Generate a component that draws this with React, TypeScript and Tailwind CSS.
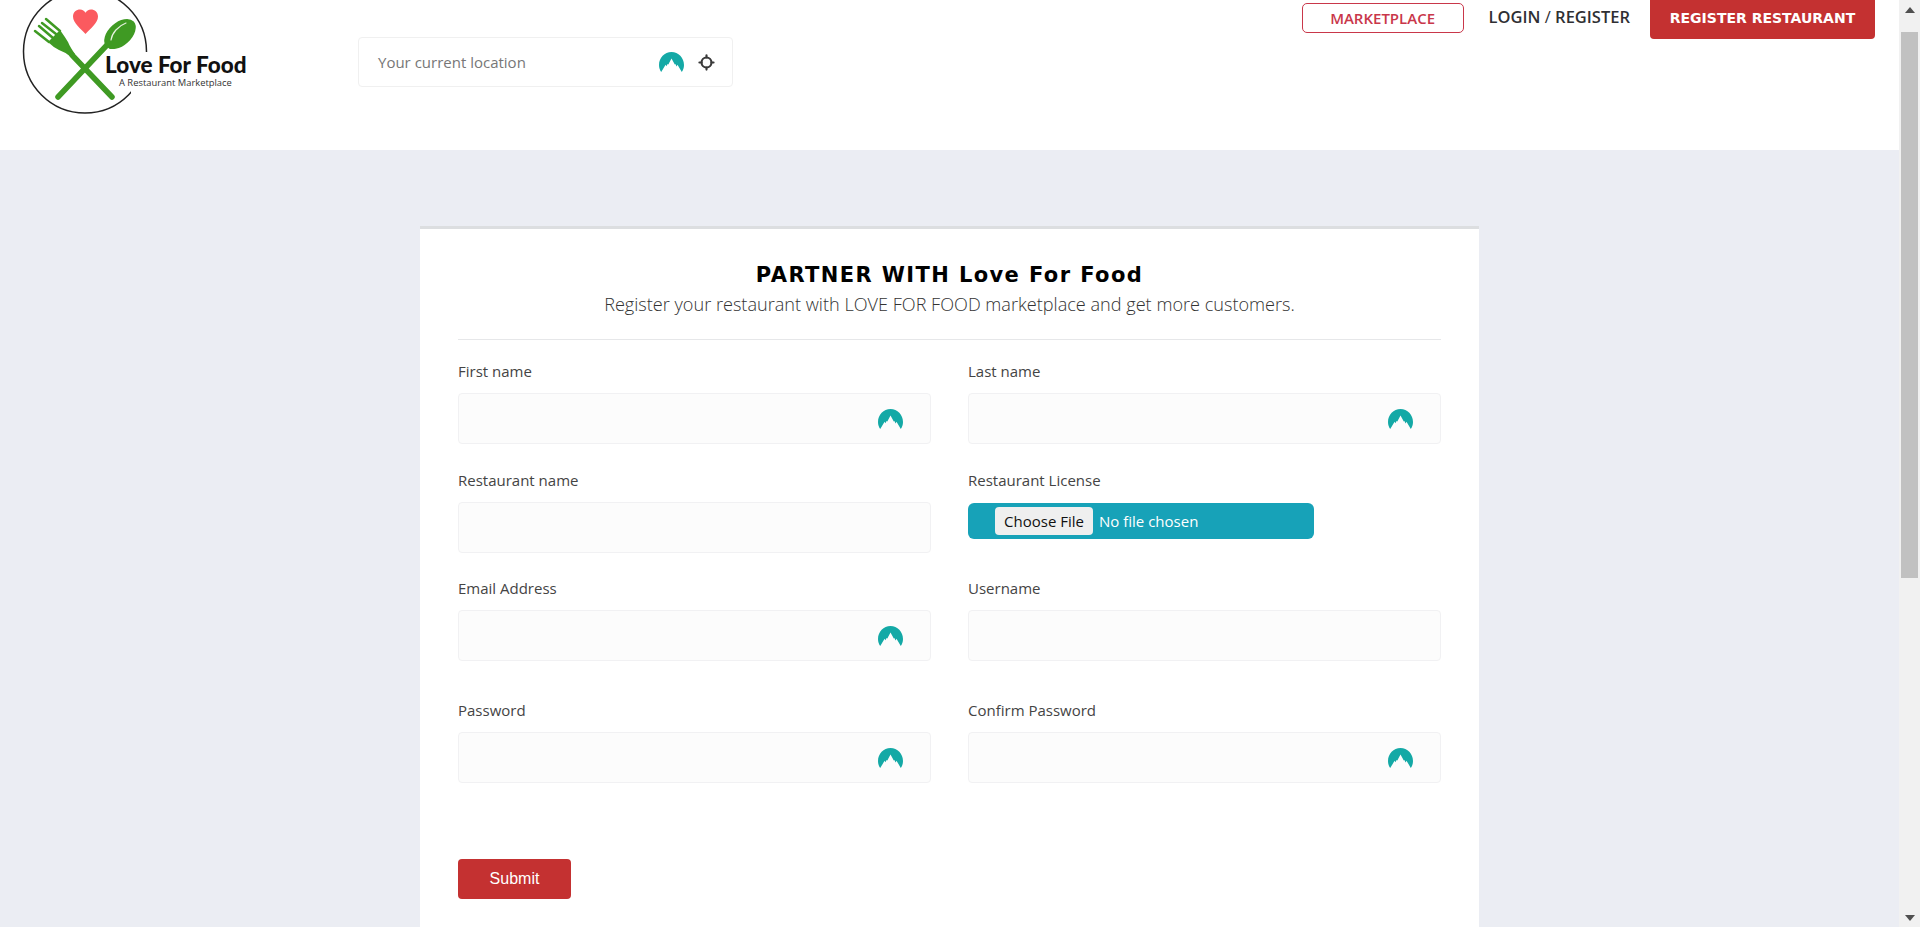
import { Locate } from 'lucide-react';

const TealDome = () => (
    <svg viewBox="0 0 25 20" className="h-5 w-[25px] shrink-0">
        <path
            d="M2.2 20C.8 18 0 15.6 0 12.9 0 5.8 5.6 0 12.5 0S25 5.8 25 12.9c0 2.7-.8 5.1-2.2 7.1l-4.3-7.3-.9 1.7-1.2-2.4-.6.6-3.3-6-3.2 6-.7-.7-1.2 2.4-.8-1.5z"
            fill="#14a9a6"
        />
    </svg>
);

const Logo = () => (
    <div className="relative h-[150px] w-[358px] shrink-0 overflow-hidden">
        <svg viewBox="0 0 170 120" className="absolute left-[15px] top-0 h-[120px] w-[170px]">
            <circle cx="70" cy="51.500" r="61.500" fill="none" stroke="#222" strokeWidth="1.500" />
            <rect x="116" y="52" width="54" height="46" fill="#fff" />
            {/* heart */}
            <path
                d="M70.500 34C66 29 58 23 58 16.500 58 12 61.500 9.500 65 9.500c2.500 0 4.500 1.300 5.500 3.300 1-2 3-3.300 5.500-3.300 3.500 0 7 2.500 7 7C83 23 75 29 70.500 34z"
                fill="#fb5a5f"
            />
            {/* fork */}
            <path d="M97 97 57 55" stroke="#3f9a23" strokeWidth="5.500" strokeLinecap="round" />
            <path d="M33 42 45 30Q50 37 53 42 55 47 60 54L56 57Q50 52 44 50 38 47 33 42z" fill="#3f9a23" />
            <path d="M34 42 20 31M38 38 24 26M41 34 27 23M45 31 31 19" stroke="#3f9a23" strokeWidth="2.500" strokeLinecap="round" />
            {/* spoon */}
            <path d="M43 97 92 45" stroke="#3f9a23" strokeWidth="5.500" strokeLinecap="round" />
            <ellipse cx="105" cy="34" rx="18.500" ry="11.500" transform="rotate(-42 105 34)" fill="#3f9a23" />
            <path d="M96 40c1-7 7-14 15-17" fill="none" stroke="#e6f2df" strokeWidth="1.200" strokeLinecap="round" />
        </svg>
        <span className="absolute left-[105px] top-[52px] font-['Lato',sans-serif] text-[22.500px] leading-[26px] font-black text-[#111] whitespace-nowrap">
            Love For Food
        </span>
        <span className="absolute left-[119px] top-[76px] font-['Open_Sans',sans-serif] text-[9.400px] leading-[13px] text-[#333] whitespace-nowrap">
            A Restaurant Marketplace
        </span>
    </div>
);

const Field = ({ label, icon = false }: { label: string; icon?: boolean }) => (
    <div>
        <label className="mb-[11px] block h-[22px] text-[15px] leading-[22px] text-[#444]">{label}</label>
        <div className="flex h-[51px] items-center justify-end rounded border border-[#f1f1f3] bg-[#fcfcfc] pr-[27px]">
            {icon && <TealDome />}
        </div>
    </div>
);

const Scrollbar = () => (
    <div className="flex h-full w-[21px] shrink-0 flex-col bg-[#f1f1f1] px-[2px]">
        <div className="flex h-[32px] justify-center pt-[7px]">
            <div className="h-0 w-0 border-x-[5px] border-b-[6px] border-x-transparent border-b-[#505050]" />
        </div>
        <div className="h-[546px] bg-[#c1c1c1]" />
        <div className="flex flex-1 items-end justify-center pb-[6px]">
            <div className="h-0 w-0 border-x-[5px] border-t-[6px] border-x-transparent border-t-[#505050]" />
        </div>
    </div>
);

export default function App() {
    return (
        <div className="flex h-[927px] w-full overflow-hidden bg-white font-['Open_Sans',sans-serif]">
            <div className="min-w-0 flex-1 overflow-hidden">
                {/* Header */}
                <header className="flex h-[150px] bg-white pr-[24px]">
                    <Logo />
                    <div className="mt-[37px] flex h-[50px] w-[375px] items-center rounded-sm border border-[#f0f0f0] bg-white pl-[19px] pr-[17px]">
                        <span className="flex-1 text-[15px] text-[#777]">Your current location</span>
                        <TealDome />
                        <Locate className="ml-[14px] h-[17px] w-[17px] text-[#3a3a3a]" strokeWidth={3} />
                    </div>
                    <nav className="ml-auto flex items-start">
                        <a className="mt-[3px] flex h-[30px] w-[162px] items-center justify-center rounded-[5px] border border-[#c9374a] text-[15px] font-semibold text-[#c9374a]">
                            MARKETPLACE
                        </a>
                        <a className="ml-[25px] mt-[5px] text-[16.500px] leading-[24px] font-semibold text-[#2f2f33]">
                            LOGIN <span className="font-normal">/</span> REGISTER
                        </a>
                        <a className="ml-[20px] flex h-[39px] w-[225px] items-center justify-center rounded-b bg-[#c43131] pb-[2px] font-['DejaVu_Sans',sans-serif] text-[14px] font-bold text-white">
                            REGISTER RESTAURANT
                        </a>
                    </nav>
                </header>

                {/* Form */}
                <main className="h-[777px] bg-[#ebedf3] pt-[76px]">
                    <div className="mx-auto h-[800px] w-[1059px] border-t-[3px] border-[#dcdee0] bg-white px-[38px] pt-[31px]">
                        <div className="border-b border-[#e6e7e9] pb-[20px] text-center">
                            <h1 className="font-['DejaVu_Sans',sans-serif] text-[21px] leading-[30px] font-bold tracking-[1.4px] text-black">
                                PARTNER WITH Love For Food
                            </h1>
                            <p className="text-[18.120px] leading-[29px] font-light text-[#333]">
                                Register your restaurant with LOVE FOR FOOD marketplace and get more customers.
                            </p>
                        </div>

                        <div className="mt-[20px] grid grid-cols-2 gap-x-[37px]">
                            <Field label="First name" icon />
                            <Field label="Last name" icon />
                        </div>
                        <div className="mt-[25px] grid grid-cols-2 gap-x-[37px]">
                            <Field label="Restaurant name" />
                            <div>
                                <label className="mb-[12px] block h-[22px] text-[15px] leading-[22px] text-[#444]">
                                    Restaurant License
                                </label>
                                <div className="flex h-[36px] w-[346px] items-center rounded-md bg-[#17a2b8] pl-[27px]">
                                    <span className="flex h-[28px] w-[98px] items-center justify-center rounded-sm bg-[#efefef] text-[15px] text-[#111]">
                                        Choose File
                                    </span>
                                    <span className="ml-[6px] text-[15px] text-white">No file chosen</span>
                                </div>
                            </div>
                        </div>
                        <div className="mt-[24px] grid grid-cols-2 gap-x-[37px]">
                            <Field label="Email Address" icon />
                            <Field label="Username" />
                        </div>
                        <div className="mt-[38px] grid grid-cols-2 gap-x-[37px]">
                            <Field label="Password" icon />
                            <Field label="Confirm Password" icon />
                        </div>

                        <button className="mt-[76px] h-[40px] w-[113px] rounded-sm bg-[#c43131] font-['Liberation_Sans',sans-serif] text-[16px] text-white">
                            Submit
                        </button>
                    </div>
                </main>
            </div>
            <Scrollbar />
        </div>
    );
}
